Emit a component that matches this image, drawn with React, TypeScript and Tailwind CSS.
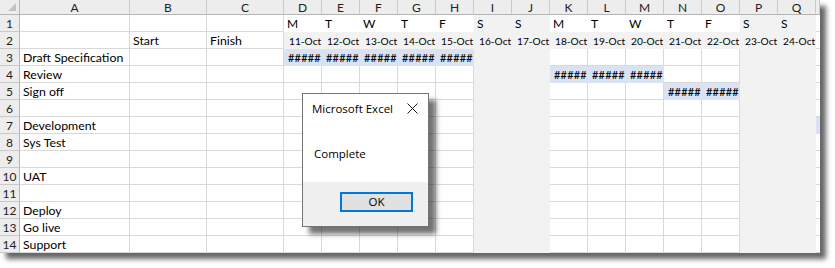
import React from 'react'

// Gantt-style worksheet with a "Complete" message box on top

type Col = { key: string; width: number }

const COLS: Col[] = [
  { key: 'A', width: 110 },
  { key: 'B', width: 77 },
  { key: 'C', width: 77 },
  ...'DEFGHIJKLMNOPQ'.split('').map((key) => ({ key, width: 38 })),
  { key: 'R', width: 4 },
]

const DAY_COLS = 'DEFGHIJKLMNOPQ'.split('')
const WEEKDAYS = ['M', 'T', 'W', 'T', 'F', 'S', 'S', 'M', 'T', 'W', 'T', 'F', 'S', 'S']
const WEEKEND = new Set(['I', 'J', 'P', 'Q'])

const TASKS: Record<number, string> = {
  3: 'Draft Specification',
  4: 'Review',
  5: 'Sign off',
  7: 'Development',
  8: 'Sys Test',
  10: 'UAT',
  12: 'Deploy',
  13: 'Go live',
  14: 'Support',
}

// cells that carry a scheduled task bar
const BARS: Record<number, string[]> = {
  3: ['D', 'E', 'F', 'G', 'H'],
  4: ['K', 'L', 'M'],
  5: ['N', 'O'],
  7: ['R'],
}

const cellFont = "font-['Lato','Open_Sans',sans-serif] text-black"

function Cell({ row, col }: { row: number; col: string }) {
  const dayIdx = DAY_COLS.indexOf(col)
  const isDay = dayIdx >= 0
  const isBar = BARS[row]?.includes(col)

  let fill = 'bg-white border-r border-b border-[#d9d9d9]'
  if (isBar) fill = 'bg-[#dae3f3]'
  else if (isDay && WEEKEND.has(col)) fill = 'bg-[#f2f2f2]'
  else if (isDay && row === 2) fill = 'bg-[#f2f2f2]'
  else if (isDay && row === 1) fill = 'bg-white'
  else if (col === 'R') fill = 'bg-white border-b border-[#d9d9d9]'

  let content: React.ReactNode = null
  if (col === 'A' && TASKS[row]) {
    content = <span className="pl-[3px] text-[12.3px] whitespace-nowrap">{TASKS[row]}</span>
  } else if (row === 2 && col === 'B') {
    content = <span className="pl-[3px] text-[12.3px]">Start</span>
  } else if (row === 2 && col === 'C') {
    content = <span className="pl-[3px] text-[12.3px]">Finish</span>
  } else if (row === 1 && isDay) {
    content = <span className="pl-[3px] text-[12px]">{WEEKDAYS[dayIdx]}</span>
  } else if (row === 2 && isDay) {
    content = <span className="pl-[5px] text-[10.2px] whitespace-nowrap">{`${11 + dayIdx}-Oct`}</span>
  } else if (isBar && col !== 'R') {
    content = <span className="pl-[4px] text-[11px] font-medium tracking-[0.2px]">#####</span>
  }

  return (
    <div className={`${fill} ${cellFont} flex items-center pt-[1px] leading-[14px]`}>
      {content}
    </div>
  )
}

function ColumnHeader({ label }: { label: string }) {
  return (
    <div className="bg-[#ededed] border-r border-b border-[#cacaca] border-b-[#b5b5b5] flex items-center justify-center font-['Lato',sans-serif] text-[12px] leading-[13px] text-[#222]">
      {label === 'R' ? '' : label}
    </div>
  )
}

function RowHeader({ n }: { n: number }) {
  return (
    <div className="bg-[#ededed] border-r border-b border-[#cacaca] border-r-[#b5b5b5] flex items-center justify-center pt-[1px] font-['Lato',sans-serif] text-[12px] leading-[14px] text-[#222]">
      {n}
    </div>
  )
}

function MessageBox() {
  return (
    <div className="absolute left-[302px] top-[93px] w-[127px] h-[134px] border border-[#747474] bg-white flex flex-col shadow-[7px_7px_5px_rgba(0,0,0,0.55)] font-['Open_Sans','Noto_Sans',sans-serif] text-black">
      <div className="h-[29px] flex items-center justify-between pl-[9px] pr-[9px]">
        <span className="text-[11.5px] leading-[14px]">Microsoft Excel</span>
        <svg width="11" height="11" viewBox="0 0 11 11" className="mr-[1px]">
          <path d="M0.5 0.5 L10.5 10.5 M10.5 0.5 L0.5 10.5" stroke="#1a1a1a" strokeWidth="1" fill="none" />
        </svg>
      </div>
      <div className="flex-1 flex items-center pl-[11px] pt-[3px]">
        <span className="text-[11.5px] leading-[14px]">Complete</span>
      </div>
      <div className="h-[44px] bg-[#f0f0f0] flex justify-end items-start pt-[10px] pr-[15px]">
        <button className="w-[73px] h-[20px] border-2 border-[#0078d7] bg-[#e1e1e1] flex items-center justify-center text-[11.5px] leading-[14px]">
          OK
        </button>
      </div>
    </div>
  )
}

export default function App() {
  const rows = Array.from({ length: 14 }, (_, i) => i + 1)

  return (
    <div className="w-[835px] h-[268px] bg-white relative overflow-hidden">
      <div className="relative w-[820px] shadow-[6px_6px_5px_rgba(0,0,0,0.6)]">
        <div className="grid grid-cols-[20px_110px_77px_77px_repeat(14,38px)_4px] grid-rows-[15px_repeat(14,17px)] bg-white">
          <div className="bg-[#ededed] border-r border-b border-[#b5b5b5] relative">
            <svg width="8" height="8" viewBox="0 0 8 8" className="absolute right-[3px] bottom-[3px]">
              <path d="M8 0 L8 8 L0 8 Z" fill="#c2c2c2" />
            </svg>
          </div>
          {COLS.map((c) => (
            <ColumnHeader key={c.key} label={c.key} />
          ))}
          {rows.map((r) => (
            <React.Fragment key={r}>
              <RowHeader n={r} />
              {COLS.map((c) => (
                <Cell key={c.key} row={r} col={c.key} />
              ))}
            </React.Fragment>
          ))}
        </div>
        <MessageBox />
      </div>
    </div>
  )
}
